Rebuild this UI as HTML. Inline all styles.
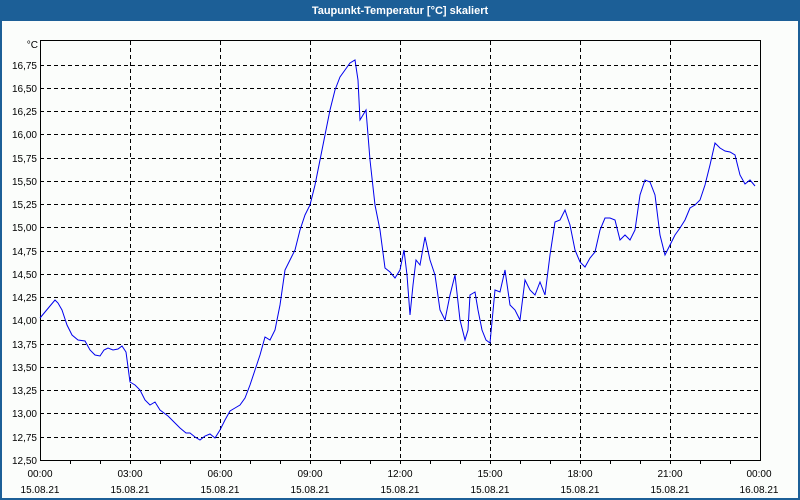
<!DOCTYPE html>
<html><head><meta charset="utf-8"><style>
html,body{margin:0;padding:0;background:#1b5e96;}
svg{display:block}
</style></head><body>
<svg width="800" height="500" xmlns="http://www.w3.org/2000/svg" font-family="Liberation Sans, sans-serif" font-size="10">
<rect x="0" y="0" width="800" height="500" fill="#1c5f97"/>
<rect x="2" y="21" width="796" height="477" fill="#fbfdfb"/>
<text x="400" y="14" fill="#fff" font-weight="bold" font-size="11" text-anchor="middle">Taupunkt-Temperatur [°C] skaliert</text>
<g stroke="#000" stroke-width="1" stroke-dasharray="4,3" fill="none">
<path d="M40 65.5H760M40 88.5H760M40 111.5H760M40 134.5H760M40 158.5H760M40 181.5H760M40 204.5H760M40 227.5H760M40 251.5H760M40 274.5H760M40 297.5H760M40 320.5H760M40 344.5H760M40 367.5H760M40 390.5H760M40 413.5H760M40 437.5H760"/>
<path d="M130.5 41V460M220.5 41V460M310.5 41V460M400.5 41V460M490.5 41V460M580.5 41V460M670.5 41V460"/>
</g>
<rect x="40.5" y="40.5" width="720" height="420" fill="none" stroke="#000"/>
<g stroke="#000"><path d="M70.5 460v4M100.5 460v4M130.5 460v4M160.5 460v4M190.5 460v4M220.5 460v4M250.5 460v4M280.5 460v4M310.5 460v4M340.5 460v4M370.5 460v4M400.5 460v4M430.5 460v4M460.5 460v4M490.5 460v4M520.5 460v4M550.5 460v4M580.5 460v4M610.5 460v4M640.5 460v4M670.5 460v4M700.5 460v4M730.5 460v4"/></g>
<g text-anchor="end" fill="#000">
<text x="38" y="48">°C</text>
<text x="37" y="69">16,75</text><text x="37" y="92">16,50</text><text x="37" y="115">16,25</text><text x="37" y="138">16,00</text><text x="37" y="162">15,75</text><text x="37" y="185">15,50</text><text x="37" y="208">15,25</text><text x="37" y="231">15,00</text><text x="37" y="255">14,75</text><text x="37" y="278">14,50</text><text x="37" y="301">14,25</text><text x="37" y="324">14,00</text><text x="37" y="348">13,75</text><text x="37" y="371">13,50</text><text x="37" y="394">13,25</text><text x="37" y="417">13,00</text><text x="37" y="441">12,75</text><text x="37" y="464">12,50</text>
</g>
<g text-anchor="middle" fill="#000">
<text x="40" y="477">00:00</text><text x="40" y="493">15.08.21</text>
<text x="130" y="477">03:00</text><text x="130" y="493">15.08.21</text>
<text x="220" y="477">06:00</text><text x="220" y="493">15.08.21</text>
<text x="310" y="477">09:00</text><text x="310" y="493">15.08.21</text>
<text x="400" y="477">12:00</text><text x="400" y="493">15.08.21</text>
<text x="490" y="477">15:00</text><text x="490" y="493">15.08.21</text>
<text x="580" y="477">18:00</text><text x="580" y="493">15.08.21</text>
<text x="670" y="477">21:00</text><text x="670" y="493">15.08.21</text>
<text x="759" y="477">00:00</text><text x="759" y="493">16.08.21</text>
</g>
<polyline fill="none" stroke="#0000ee" stroke-width="1" points="40,318 45,312 50,306 55,300 58,303 62,310 67,325 72,335 78,340 85,341 90,350 95,355 100,356 104,350 108,348 113,350 118,349 122,346 126,352 130,382 135,385 140,390 145,400 150,405 155,402 160,410 168,416 175,423 180,428 186,433 190,433 195,437 200,440 205,436 210,434 215,438 220,430 225,420 230,411 235,408 240,405 245,398 250,385 255,370 260,355 265,337 270,340 275,330 280,305 285,270 290,260 295,250 300,230 305,215 310,205 315,185 320,160 325,135 330,110 335,90 340,77 345,70 350,63 355,60 358,80 360,120 363,115 366,110 370,160 375,205 380,230 385,268 390,272 395,278 400,270 404,250 407,275 410,315 413,285 416,260 420,265 425,237 430,260 435,275 440,310 445,320 450,295 455,275 460,320 465,340 468,330 470,295 475,292 478,310 482,330 486,340 490,343 495,290 500,292 505,270 510,305 515,310 520,320 525,280 530,290 535,295 540,282 545,295 550,255 555,222 560,220 565,210 570,225 575,250 580,262 585,267 590,258 595,252 600,230 605,218 610,218 615,220 620,240 625,235 630,240 635,230 640,195 645,180 650,182 655,195 660,235 665,255 670,245 675,235 680,228 685,220 690,208 695,205 700,200 705,185 710,165 715,143 720,148 725,151 730,152 735,155 740,175 745,184 750,180 755,186"/>
</svg>
</body></html>
